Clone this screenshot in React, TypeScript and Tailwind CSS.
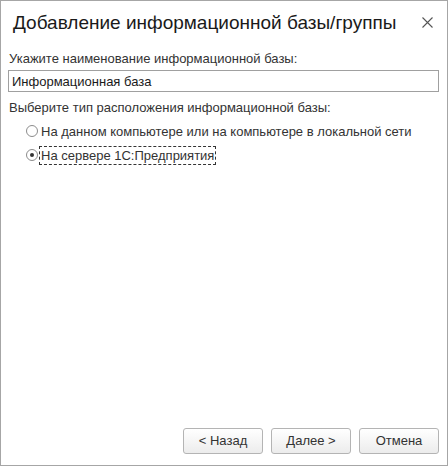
import React from 'react';

function Radio({ checked, label, focused }: { checked?: boolean; label: string; focused?: boolean }) {
  return (
    <div className="flex items-center h-[24px]">
      <span className="w-[12px] h-[12px] rounded-full border border-[#8c8c8c] bg-white flex items-center justify-center">
        {checked && <span className="w-[4px] h-[4px] rounded-full bg-[#333]" />}
      </span>
      <span
        className={`ml-[2px] px-[1px] leading-[17px] ${
          focused ? 'outline outline-1 outline-dashed outline-[#333]' : ''
        }`}
      >
        {label}
      </span>
    </div>
  );
}

function Button({ children }: { children: React.ReactNode }) {
  return (
    <button className="w-[80px] h-[26px] rounded-[3px] border border-[#b4b4b4] bg-gradient-to-b from-[#ffffff] to-[#ececec] text-[13px] text-[#333]">
      {children}
    </button>
  );
}

export default function App() {
  return (
    <div
      className="w-[448px] h-[466px] bg-white border border-[#a6a6a6] flex flex-col text-[#333]"
      style={{ fontFamily: '"Liberation Sans", Arial, sans-serif' }}
    >
      <div className="flex items-center justify-between h-[42px] pl-[12px] pr-[14px]">
        <h1 className="text-[19px] text-[#1a1a1a] leading-none">Добавление информационной базы/группы</h1>
        <svg width="11" height="11" viewBox="0 0 11 11" className="mt-[1px]">
          <path d="M0.5 0.5 L10.5 10.5 M10.5 0.5 L0.5 10.5" stroke="#555" strokeWidth="1.1" />
        </svg>
      </div>
      <div className="flex flex-col px-[7px] text-[13px]">
        <div className="pl-[1px] h-[27px] flex items-end pb-[2px]">Укажите наименование информационной базы:</div>
        <input
          readOnly
          value="Информационная база"
          className="h-[22px] w-[431px] border border-[#a0a0a0] px-[3px] text-[13px] text-[#1a1a1a] outline-none"
        />
        <div className="pl-[1px] h-[26px] flex items-end pb-[1px]">Выберите тип расположения информационной базы:</div>
        <div className="pl-[18px] pt-[1px] flex flex-col">
          <Radio label="На данном компьютере или на компьютере в локальной сети" />
          <Radio checked focused label="На сервере 1С:Предприятия" />
        </div>
      </div>
      <div className="flex-1" />
      <div className="flex justify-end gap-[8px] pr-[8px] pb-[11px]">
        <Button>&lt; Назад</Button>
        <Button>Далее &gt;</Button>
        <Button>Отмена</Button>
      </div>
    </div>
  );
}
